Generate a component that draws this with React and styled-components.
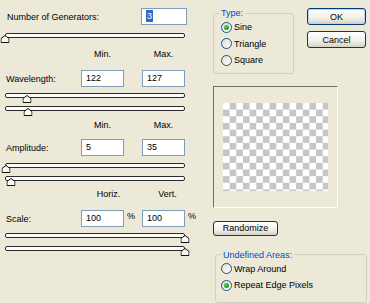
import React from 'react';
import styled, { createGlobalStyle } from 'styled-components';

const GlobalStyle = createGlobalStyle`
  html, body {
    margin: 0;
    padding: 0;
    background: #ece9d8;
  }
  body {
    font-family: "Liberation Sans", Arial, sans-serif;
    font-size: 9px;
    color: #000;
  }
`;

const Dialog = styled.div`
  display: flex;
  width: 370px;
  height: 303px;
  overflow: hidden;
  background: #ece9d8;
`;

const Controls = styled.div`
  display: flex;
  flex-direction: column;
  width: 190px;
  margin-left: 5px;
  padding-top: 8px;
`;

const TopField = styled.div`
  display: flex;
  align-items: center;
  justify-content: space-between;
  width: 181px;
  padding-left: 1px;
`;

const FieldRow = styled.div`
  display: grid;
  grid-template-columns: 76px 43px 18px 43px 1fr;
  align-items: center;
  margin-top: ${p => p.$mt || 0}px;
`;

const Label = styled.span`
  white-space: nowrap;
  padding-left: 1px;
`;

const Head = styled.span`
  grid-column: ${p => p.$col};
  text-align: center;
  padding-left: ${p => p.$nudge || 0}px;
  line-height: 12px;
`;

const Field = styled.div`
  box-sizing: border-box;
  width: ${p => p.$w || 43}px;
  height: 17px;
  border: 1px solid #7f9db9;
  background: #fff;
  padding-left: 4px;
  line-height: 15px;
  white-space: nowrap;
`;

const Selected = styled.span`
  background: #316ac5;
  color: #fff;
  padding: 1px 1px;
`;

const Suffix = styled.span`
  padding-left: 3px;
  align-self: start;
  line-height: 13px;
`;

const SliderBox = styled.div`
  position: relative;
  width: 180px;
  height: 10px;
  margin-top: ${p => p.$mt || 0}px;
`;

const Track = styled.div`
  box-sizing: border-box;
  height: 5px;
  border: 1px solid #2b2b2b;
  border-radius: 2px;
  background: #fdfdfb;
`;

const Thumb = styled.svg`
  position: absolute;
  top: 2px;
  width: 9px;
  height: 8px;
  transform: translateX(-50%);
`;

const Side = styled.div`
  display: flex;
  flex-direction: column;
  width: 154px;
  margin-left: 18px;
`;

const TopRow = styled.div`
  display: flex;
  justify-content: space-between;
  align-items: flex-start;
`;

const Group = styled.fieldset`
  box-sizing: border-box;
  width: ${p => p.$w}px;
  margin: ${p => p.$mt}px 0 0 ${p => p.$ml || 0}px;
  padding: 0 0 ${p => p.$pb || 4}px 5px;
  border: 1px solid #d0d0bf;
  border-radius: 3px;
`;

const Legend = styled.legend`
  color: #0046d5;
  padding: 0 2px;
  line-height: 12px;
`;

const Option = styled.div`
  display: flex;
  align-items: center;
  gap: 2px;
  height: 16.5px;
  margin-left: ${p => p.$ml || 0}px;
  white-space: nowrap;
`;

const Dot = styled.span`
  box-sizing: border-box;
  display: flex;
  align-items: center;
  justify-content: center;
  width: 11px;
  height: 11px;
  border: 1px solid #1c5180;
  border-radius: 50%;
  background: linear-gradient(135deg, #dcdcd7, #ffffff);

  &::after {
    content: '';
    display: ${p => (p.$on ? 'block' : 'none')};
    width: 5px;
    height: 5px;
    border-radius: 50%;
    background: radial-gradient(circle at 35% 35%, #5fd05f, #21a121 60%, #1a8a1a);
  }
`;

const Buttons = styled.div`
  display: flex;
  flex-direction: column;
  gap: 6px;
  margin: 8px 1px 0 0;
`;

const Button = styled.div`
  box-sizing: border-box;
  display: flex;
  align-items: center;
  justify-content: center;
  width: ${p => p.$w}px;
  height: ${p => p.$h || 17}px;
  margin-top: ${p => p.$mt || 0}px;
  border: 1px solid #003c74;
  border-radius: 3px;
  background: linear-gradient(#ffffff, #f0f0ea 60%, #d6d0c5);
  box-shadow: ${p => (p.$default ? 'inset 0 0 0 1px #b9d1f4' : 'none')};
`;

const Preview = styled.div`
  box-sizing: border-box;
  display: flex;
  align-items: center;
  justify-content: center;
  width: 125px;
  height: 122px;
  margin-top: 12px;
  border: 1px solid;
  border-color: #716f64 #ffffff #ffffff #716f64;
`;

const Checker = styled.div`
  width: 105px;
  height: 88px;
  background: repeating-conic-gradient(#c6c6c6 0 25%, #ffffff 0 50%) 0 0 / 13.3px 13.3px;
`;

function Slider({ value, min, max, mt }) {
  const pct = ((value - min) / (max - min)) * 100;
  return (
    <SliderBox $mt={mt}>
      <Track />
      <Thumb viewBox="0 0 9 8" style={{ left: `${pct}%` }}>
        <path d="M0.5 7.5V3.5L4.5 0.5L8.5 3.5V7.5Z" fill="#fbfbf6" stroke="#111" strokeWidth="1" />
      </Thumb>
    </SliderBox>
  );
}

function Radio({ on, ml, children }) {
  return (
    <Option $ml={ml}>
      <Dot $on={on} />
      {children}
    </Option>
  );
}

export default function App() {
  return (
    <>
      <GlobalStyle />
      <Dialog>
        <Controls>
          <TopField>
            <Label>Number of Generators:</Label>
            <Field $w={46}><Selected>3</Selected></Field>
          </TopField>
          <Slider value={1} min={1} max={999} mt={8} />

          <FieldRow $mt={5}>
            <Head $col={2}>Min.</Head>
            <Head $col={4}>Max.</Head>
          </FieldRow>
          <FieldRow $mt={10}>
            <Label>Wavelength:</Label>
            <Field>122</Field>
            <span />
            <Field>127</Field>
          </FieldRow>
          <Slider value={122} min={1} max={999} mt={6} />
          <Slider value={127} min={1} max={999} mt={3} />

          <FieldRow $mt={3}>
            <Head $col={2}>Min.</Head>
            <Head $col={4}>Max.</Head>
          </FieldRow>
          <FieldRow $mt={8}>
            <Label>Amplitude:</Label>
            <Field>5</Field>
            <span />
            <Field>35</Field>
          </FieldRow>
          <Slider value={5} min={1} max={999} mt={7} />
          <Slider value={35} min={1} max={999} mt={3} />

          <FieldRow $mt={2}>
            <Head $col={2} $nudge={12}>Horiz.</Head>
            <Head $col={4} $nudge={8}>Vert.</Head>
          </FieldRow>
          <FieldRow $mt={10}>
            <Label>Scale:</Label>
            <Field>100</Field>
            <Suffix>%</Suffix>
            <Field>100</Field>
            <Suffix>%</Suffix>
          </FieldRow>
          <Slider value={100} min={1} max={100} mt={6} />
          <Slider value={100} min={1} max={100} mt={3} />
        </Controls>

        <Side>
          <TopRow>
            <Group $w={81} $mt={7}>
              <Legend>Type:</Legend>
              <Radio on ml={2}>Sine</Radio>
              <Radio ml={2}>Triangle</Radio>
              <Radio ml={2}>Square</Radio>
            </Group>
            <Buttons>
              <Button $w={59} $default>OK</Button>
              <Button $w={59}>Cancel</Button>
            </Buttons>
          </TopRow>

          <Preview>
            <Checker />
          </Preview>

          <Button $w={65} $h={15} $mt={13}>Randomize</Button>

          <Group $w={152} $mt={13} $ml={2} $pb={8}>
            <Legend>Undefined Areas:</Legend>
            <Radio>Wrap Around</Radio>
            <Radio on>Repeat Edge Pixels</Radio>
          </Group>
        </Side>
      </Dialog>
    </>
  );
}
